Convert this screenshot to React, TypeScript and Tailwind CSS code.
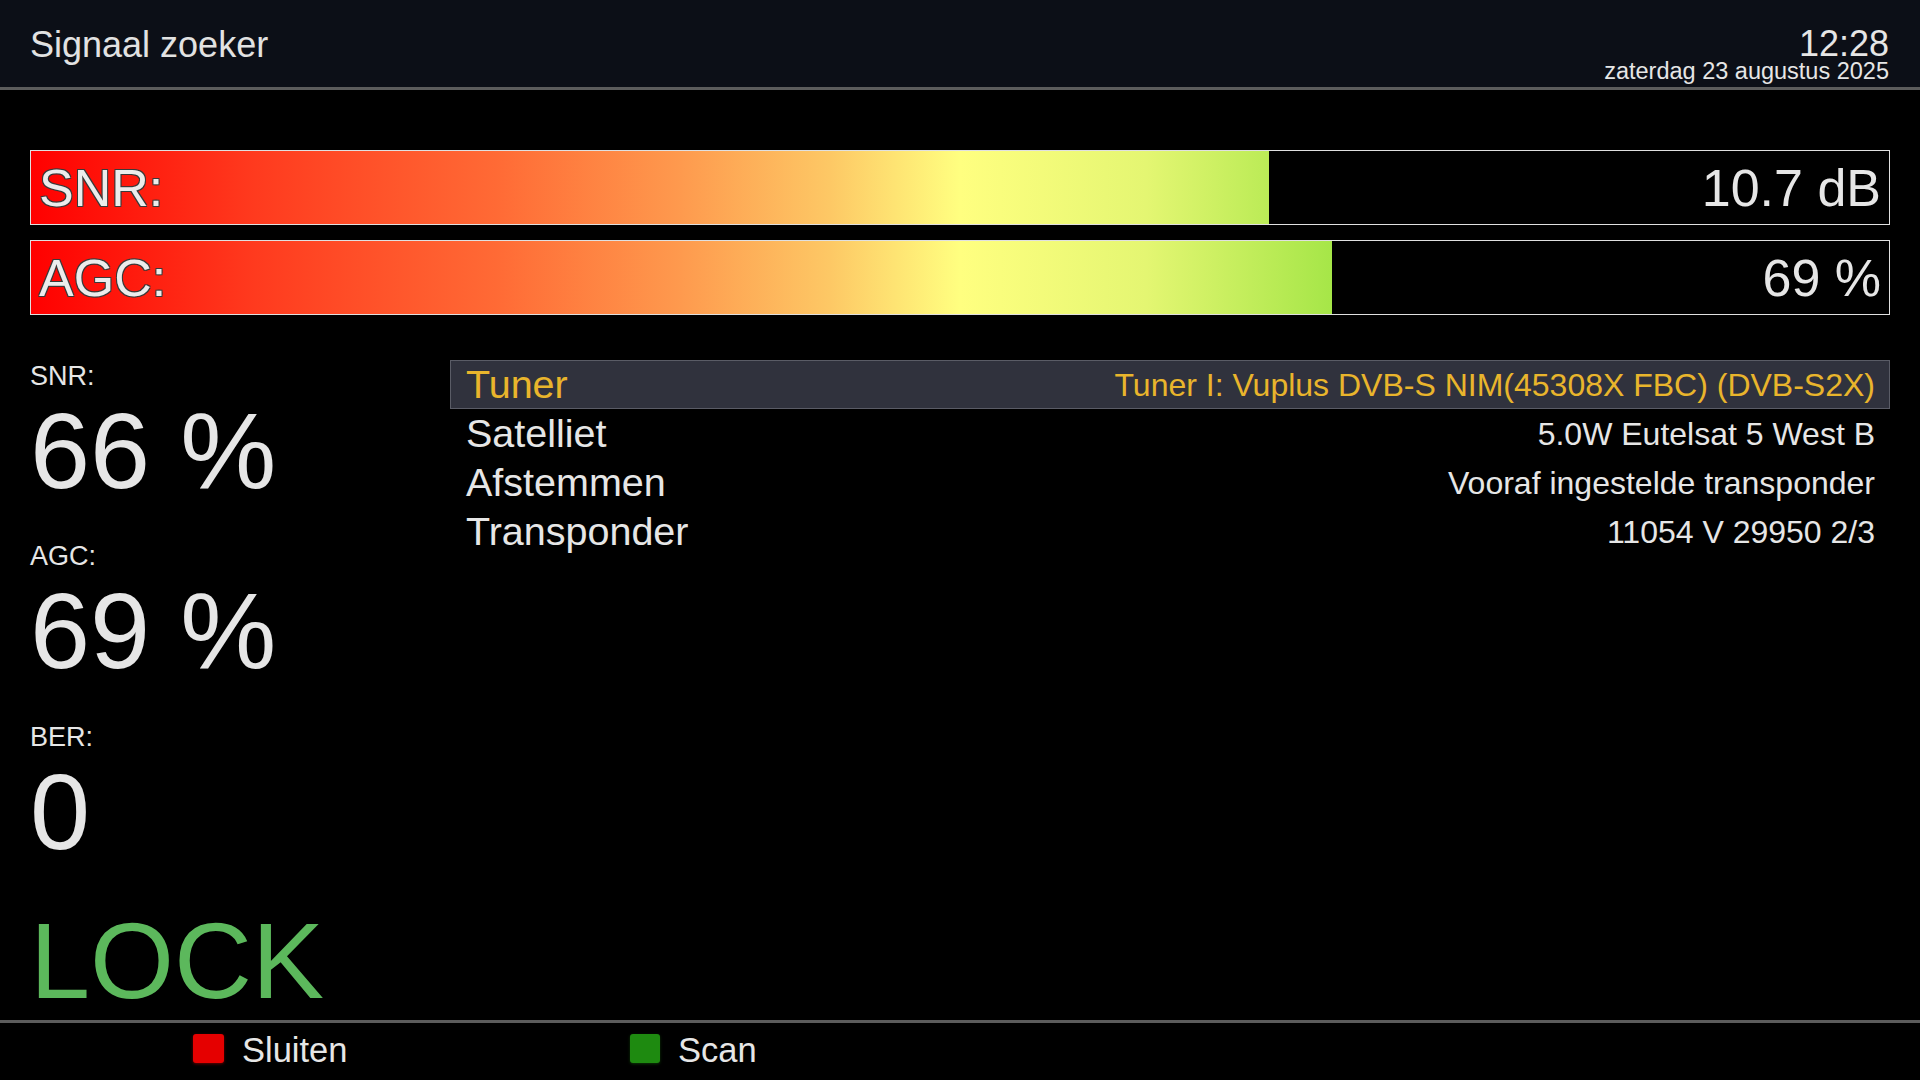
const GRADIENT =
  "bg-[linear-gradient(90deg,#ff0000_0%,#ff3a1e_12%,#ff6a35_25%,#fe9a4e_35%,#fdc865_43%,#ffff80_50%,#e4f672_60%,#a6e648_70%,#40d020_100%)]";

interface BarProps {
  label: string;
  value: string;
  fillClass: string;
}

function SignalBar({ label, value, fillClass }: BarProps) {
  return (
    <div className="relative h-[75px] border border-[#e0e0e0] bg-black">
      {/* fill, gradient spans the whole bar and gets clipped */}
      <div className={`absolute inset-y-0 left-0 overflow-hidden ${fillClass}`}>
        <div className={`h-full w-[1858px] ${GRADIENT}`} />
      </div>
      <div className="relative flex h-full items-center justify-between pl-[8px] pr-[8px]">
        <span className="text-[52px] leading-none text-[#ececec] [text-shadow:-1px_-1px_0_#3a3a3a,1px_-1px_0_#3a3a3a,-1px_1px_0_#3a3a3a,1px_1px_0_#3a3a3a]">
          {label}
        </span>
        <span className="text-[52px] leading-none text-[#e6e6e6]">{value}</span>
      </div>
    </div>
  );
}

const rows = [
  { label: "Tuner", value: "Tuner I: Vuplus DVB-S NIM(45308X FBC) (DVB-S2X)", selected: true },
  { label: "Satelliet", value: "5.0W Eutelsat 5 West B" },
  { label: "Afstemmen", value: "Vooraf ingestelde transponder" },
  { label: "Transponder", value: "11054 V 29950 2/3" },
];

export default function App() {
  return (
    <div className="flex h-[1080px] w-[1920px] flex-col overflow-hidden bg-black font-['Liberation_Sans',Arial,sans-serif] text-[#e6e6e6]">
      {/* Header */}
      <div className="flex h-[90px] shrink-0 justify-between border-b-[3px] border-[#5c5c5c] bg-[#0c0f17] px-[30px]">
        <div className="pt-[27px] text-[36px] leading-none text-[#e2e2e2]">Signaal zoeker</div>
        <div className="flex flex-col items-end pr-[1px] pt-[27px]">
          <span className="text-[36px] leading-[34px]">12:28</span>
          <span className="text-[23.5px] leading-[21px]">zaterdag 23 augustus 2025</span>
        </div>
      </div>

      {/* Main */}
      <div className="flex flex-1 flex-col px-[30px] pt-[60px]">
        <SignalBar label="SNR:" value="10.7 dB" fillClass="w-[1238px]" />
        <div className="mt-[15px]">
          <SignalBar label="AGC:" value="69 %" fillClass="w-[1301px]" />
        </div>

        <div className="flex">
          {/* Left stats */}
          <div className="flex w-[420px] shrink-0 flex-col pt-[48px]">
            <span className="text-[27px] leading-none">SNR:</span>
            <span className="mt-[7px] text-[108px] leading-none">66 %</span>
            <span className="mt-[38px] text-[27px] leading-none">AGC:</span>
            <span className="mt-[7px] text-[108px] leading-none">69 %</span>
            <span className="mt-[39px] text-[27px] leading-none">BER:</span>
            <span className="mt-[7px] text-[108px] leading-none">0</span>
            <span className="mt-[41px] text-[108px] leading-none text-[#5cb85c]">LOCK</span>
          </div>

          {/* Info list */}
          <div className="flex flex-1 flex-col pt-[45px]">
            {rows.map((row) =>
              row.selected ? (
                <div
                  key={row.label}
                  className="flex h-[49px] items-center justify-between border border-[#5a5c66] bg-[#30323d] pl-[15px] pr-[14px] text-[#e9b52c]"
                >
                  <span className="text-[39.5px] leading-none">{row.label}</span>
                  <span className="text-[32px] leading-none">{row.value}</span>
                </div>
              ) : (
                <div
                  key={row.label}
                  className="flex h-[49px] items-center justify-between border border-transparent pl-[15px] pr-[14px]"
                >
                  <span className="text-[39.5px] leading-none">{row.label}</span>
                  <span className="text-[32px] leading-none">{row.value}</span>
                </div>
              )
            )}
          </div>
        </div>
      </div>

      {/* Footer */}
      <div className="flex h-[60px] shrink-0 items-start border-t-[3px] border-[#5c5c5c] pl-[193px] pt-[10px]">
        <div className="flex w-[437px] items-start">
          <span className="mt-[1px] h-[29px] w-[31px] rounded-[3px] bg-[#e50000] shadow-[0_1px_3px_rgba(255,0,0,0.4)]" />
          <span className="ml-[18px] text-[34.5px] leading-none">Sluiten</span>
        </div>
        <div className="flex items-start">
          <span className="mt-[1px] h-[29px] w-[30px] rounded-[3px] bg-[#1e8a10] shadow-[0_1px_3px_rgba(30,140,16,0.4)]" />
          <span className="ml-[18px] text-[34.5px] leading-none">Scan</span>
        </div>
      </div>
    </div>
  );
}
